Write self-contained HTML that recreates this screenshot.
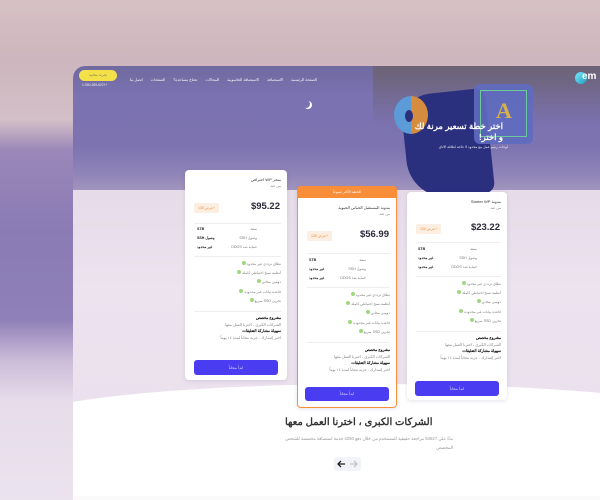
<!DOCTYPE html>
<html><head><meta charset="utf-8"><style>
*{margin:0;padding:0;box-sizing:border-box}
html,body{width:600px;height:500px;overflow:hidden}
body{position:relative;font-family:"Liberation Sans","Noto Sans CJK SC",sans-serif;background:#d4bcc1}
.a{position:absolute}
.outer{left:0;top:0;width:600px;height:500px;background:linear-gradient(180deg,#d6c1c4 0,#cdb6bd 60px,#d3bfc8 120px,#9b87b8 150px,#8a7bb5 230px,#8f80b8 320px,#cbbbd8 360px,#e6dcea 400px,#ebe3ee 500px)}
.frame{left:73px;top:66px;width:527px;height:434px;border-top-left-radius:12px;overflow:hidden;background:#fff}
.t{white-space:nowrap;direction:rtl}
.card{background:#fff;border-radius:4px;box-shadow:0 1px 4px rgba(80,60,120,.15)}
.btn{background:#4a3cf0;border-radius:3px;color:#dcd8ff;font-size:4px;text-align:center}
.price{font-size:9.5px;font-weight:bold;color:#2a2a3a}
.badge{background:#fdeee2;color:#f08a3a;font-size:3.5px;border-radius:2px;text-align:center}
.s{font-size:3.6px;color:#777}
.b{font-size:3.6px;color:#222;font-weight:bold}
.hr{height:1px;background:#eee}
.ck{width:4px;height:4px;border-radius:50%;background:#9fd67f;display:inline-block}
</style></head><body>
<div class="a outer"></div>
<div class="a frame">
 <div class="a" style="left:0;top:0;width:527px;height:140px;background:linear-gradient(180deg,#6f6a9e 0,#7b72b2 30px,#7c73b0 80px,#9186b8 110px,#a89ac0 130px,#b5a7c4 140px)"></div>
 <div class="a" style="left:300px;top:0;width:227px;height:60px;background:linear-gradient(180deg,#6d6376,rgba(120,110,160,0))"></div>
 <div class="a" style="left:0;top:124px;width:527px;height:220px;background:linear-gradient(180deg,#e6dbe8 0,#ede3ef 100px,#ebe1ee 220px)"></div>
 <div class="a" style="left:-60px;top:318px;width:720px;height:200px;background:#fff;border-radius:50% 50% 0 0/40px 40px 0 0"></div>
</div>
<!-- header -->
<div class="a" style="left:79px;top:70px;width:38px;height:11px;background:#f4e14a;border-radius:6px;font-size:3.5px;color:#776;text-align:center;line-height:11px">تجربة مجانية</div>
<div class="a t" style="left:82px;top:83px;font-size:3.3px;color:#eee">+1-980-389-6227</div>
<div class="a t" style="left:130px;top:77px;width:187px;font-size:3.8px;color:#f2eef8;display:flex;justify-content:space-between"><span>الصفحة الرئيسية</span><span>الاستضافة</span><span>الاستضافة الحاسوبية</span><span>المجالات</span><span>تحتاج مساعدة؟</span><span>الصفحات</span><span>اتصل بنا</span></div>
<div class="a" style="left:575px;top:72px;width:12px;height:12px;border-radius:50%;background:linear-gradient(135deg,#7ef,#29b)"></div>
<div class="a" style="left:582px;top:71px;font-size:10px;color:#fff;font-weight:bold">em</div>
<div class="a" style="left:302px;top:100px;width:8px;height:8px;border-radius:50%;box-shadow:2px 1px 0 #fff"></div>
<!-- illustration -->
<div class="a" style="left:405px;top:92px;width:85px;height:105px;background:#2a2f7e;border-radius:30px 10px 10px 40px;transform:rotate(-6deg)"></div>
<div class="a" style="left:474px;top:84px;width:59px;height:60px;background:#5f6bc0;border-radius:6px;opacity:.9"></div>
<div class="a" style="left:480px;top:90px;width:47px;height:47px;border:1px solid #6ccb98"></div>
<div class="a" style="left:496px;top:98px;font:bold 22px 'Liberation Serif',serif;color:#d4b14a">A</div>
<div class="a" style="left:394px;top:96px;width:34px;height:38px;border-radius:50%;background:linear-gradient(90deg,#5b9cd8 50%,#d68c3f 50%);"></div>
<div class="a" style="left:405px;top:110px;width:8px;height:12px;border-radius:50%;background:#2a2f7e"></div>
<div class="a t" style="right:97px;top:121px;font-size:8.5px;font-weight:bold;color:#fff;line-height:11px;text-align:right">اختر خطة تسعير مرنة لك<br>و اختر!</div>
<div class="a t" style="right:92px;top:145px;font-size:3.5px;color:#eee">لوحات رسم عمل مع مجدود لا حاجة لطاقة الاتاي</div>
<!-- left card -->
<div class="a card" style="left:185px;top:170px;width:102px;height:210px">
 <div class="a t" style="right:6px;top:7px;font-size:4px;color:#333">متجر WP احترافي</div>
 <div class="a t s" style="right:6px;top:14px">من عند</div>
 <div class="a badge" style="left:9px;top:33px;width:25px;height:10px;line-height:10px">عرض 130+</div>
 <div class="a price" style="right:7px;top:31px">$95.22</div>
 <div class="a hr" style="left:9px;right:6px;top:53px"></div>
 <div class="a b" style="left:12px;top:57px">STB</div><div class="a t s" style="right:30px;top:57px">سعة</div>
 <div class="a b t" style="left:12px;top:66px">وصول SSH</div><div class="a t s" style="right:30px;top:66px">وصول SSH</div>
 <div class="a b t" style="left:12px;top:75px">غير محدود</div><div class="a t s" style="right:30px;top:75px">حماية ضد DDOS</div>
 <div class="a hr" style="left:9px;right:6px;top:86px"></div>
 <div class="a t s" style="right:6px;top:90px;line-height:9.2px;text-align:right">نطاق ترددي غير محدود <span class="ck"></span><br>أنظمة نسخ احتياطي كاملة <span class="ck"></span><br>دومين مجاني <span class="ck"></span><br>قاعدة بيانات غير محدودة <span class="ck"></span><br>تخزين SSD سريع <span class="ck"></span></div>
 <div class="a hr" style="left:9px;right:6px;top:141px"></div>
 <div class="a t" style="right:6px;top:145px;font-size:3.8px;line-height:6.5px;text-align:right"><b>مشروع مخصص</b><br><span style="color:#888">الشركات الكبرى ، اخترنا العمل معها</span><br><b>سهولة مشاركة التعليقات</b><br><span style="color:#888">اختر إصدارك - جربه مجاناً لمدة ١٤ يوماً</span></div>
 <div class="a btn" style="left:9px;top:190px;width:84px;height:15px;line-height:15px">ابدأ مجاناً</div>
</div>
<!-- middle card -->
<div class="a card" style="left:297px;top:186px;width:100px;height:222px;border:1.5px solid #f88e38">
 <div class="a" style="left:0;top:0;right:0;height:11px;background:#f88e38;color:#fff;font-size:3.6px;text-align:center;line-height:11px">الخطة الأكثر شيوعاً</div>
 <div class="a t" style="right:6px;top:18px;font-size:4px;color:#333">مدونة المستقبل الحياتي الحيوية</div>
 <div class="a t s" style="right:6px;top:25px">من عند</div>
 <div class="a badge" style="left:9px;top:44px;width:25px;height:10px;line-height:10px">عرض 130+</div>
 <div class="a price" style="right:7px;top:42px">$56.99</div>
 <div class="a hr" style="left:9px;right:6px;top:66px"></div>
 <div class="a b" style="left:11px;top:71px">STB</div><div class="a t s" style="right:30px;top:71px">سعة</div>
 <div class="a b t" style="left:11px;top:80px">غير محدود</div><div class="a t s" style="right:30px;top:80px">وصول SSH</div>
 <div class="a b t" style="left:11px;top:89px">غير محدود</div><div class="a t s" style="right:30px;top:89px">حماية ضد DDOS</div>
 <div class="a hr" style="left:9px;right:6px;top:100px"></div>
 <div class="a t s" style="right:6px;top:104px;line-height:9.2px;text-align:right">نطاق ترددي غير محدود <span class="ck"></span><br>أنظمة نسخ احتياطي كاملة <span class="ck"></span><br>دومين مجاني <span class="ck"></span><br>قاعدة بيانات غير محدودة <span class="ck"></span><br>تخزين SSD سريع <span class="ck"></span></div>
 <div class="a hr" style="left:9px;right:6px;top:155px"></div>
 <div class="a t" style="right:6px;top:160px;font-size:3.8px;line-height:6.5px;text-align:right"><b>مشروع مخصص</b><br><span style="color:#888">الشركات الكبرى ، اخترنا العمل معها</span><br><b>سهولة مشاركة التعليقات</b><br><span style="color:#888">اختر إصدارك - جربه مجاناً لمدة ١٤ يوماً</span></div>
 <div class="a btn" style="left:7px;top:200px;width:84px;height:14px;line-height:14px">ابدأ مجاناً</div>
</div>
<!-- right card -->
<div class="a card" style="left:407px;top:192px;width:100px;height:208px">
 <div class="a t" style="right:6px;top:7px;font-size:4px;color:#333">مدونة Starter WP</div>
 <div class="a t s" style="right:6px;top:14px">من عند</div>
 <div class="a badge" style="left:9px;top:32px;width:25px;height:10px;line-height:10px">عرض 130+</div>
 <div class="a price" style="right:7px;top:30px">$23.22</div>
 <div class="a hr" style="left:9px;right:6px;top:50px"></div>
 <div class="a b" style="left:11px;top:55px">STB</div><div class="a t s" style="right:30px;top:55px">سعة</div>
 <div class="a b t" style="left:11px;top:64px">غير محدود</div><div class="a t s" style="right:30px;top:64px">وصول SSH</div>
 <div class="a b t" style="left:11px;top:73px">غير محدود</div><div class="a t s" style="right:30px;top:73px">حماية ضد DDOS</div>
 <div class="a hr" style="left:9px;right:6px;top:84px"></div>
 <div class="a t s" style="right:6px;top:88px;line-height:9.2px;text-align:right">نطاق ترددي غير محدود <span class="ck"></span><br>أنظمة نسخ احتياطي كاملة <span class="ck"></span><br>دومين مجاني <span class="ck"></span><br>قاعدة بيانات غير محدودة <span class="ck"></span><br>تخزين SSD سريع <span class="ck"></span></div>
 <div class="a hr" style="left:9px;right:6px;top:139px"></div>
 <div class="a t" style="right:6px;top:143px;font-size:3.8px;line-height:6.5px;text-align:right"><b>مشروع مخصص</b><br><span style="color:#888">الشركات الكبرى ، اخترنا العمل معها</span><br><b>سهولة مشاركة التعليقات</b><br><span style="color:#888">اختر إصدارك - جربه مجاناً لمدة ١٤ يوماً</span></div>
 <div class="a btn" style="left:8px;top:189px;width:84px;height:15px;line-height:15px">ابدأ مجاناً</div>
</div>
<!-- bottom -->
<div class="a t" style="left:285px;top:417px;font-size:10px;color:#333;font-weight:bold">الشركات الكبرى ، اخترنا العمل معها</div>
<div class="a t" style="right:147px;top:434px;font-size:4.3px;color:#999;line-height:9px;text-align:right">بناءً على 64627 مراجعة حقيقية للمستخدم من خلال دفع 4250 خدمة استضافة مخصصة للشخص<br>المخصص</div>
<div class="a" style="left:334px;top:457px;width:27px;height:14px;background:#f1f3f8;border-radius:3px">
<svg width="27" height="14" viewBox="0 0 27 14"><path d="M11 7H4M7 4L4 7L7 10" stroke="#222" stroke-width="1.3" fill="none"/><path d="M16 7H23M20 4L23 7L20 10" stroke="#bbb" stroke-width="1.1" fill="none"/></svg></div>
<div class="a" style="left:73px;top:496px;width:527px;height:4px;background:#fafafb"></div>
</body></html>
